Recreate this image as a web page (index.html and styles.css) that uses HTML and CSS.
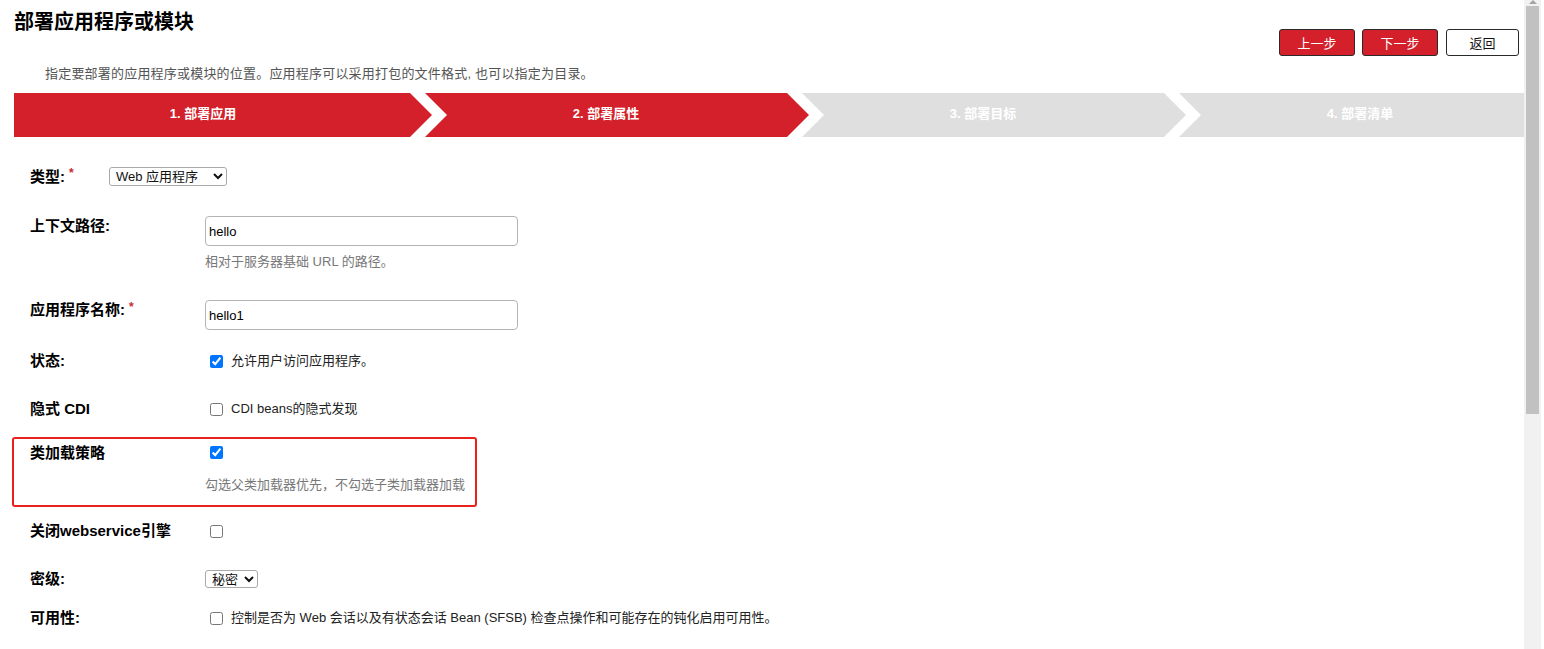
FILE: index.html
```html
<!DOCTYPE html>
<html lang="zh-CN">
<head>
<meta charset="utf-8">
<title>部署应用程序或模块</title>
<link rel="stylesheet" href="styles.css">
</head>
<body>
<div class="page">
  <div class="main">
    <div class="top">
      <h1 class="title">部署应用程序或模块</h1>
      <div class="actions">
        <button class="btn btn-red">上一步</button>
        <button class="btn btn-red">下一步</button>
        <button class="btn btn-white">返回</button>
      </div>
    </div>
    <p class="subtitle">指定要部署的应用程序或模块的位置。应用程序可以采用打包的文件格式, 也可以指定为目录。</p>
    <div class="steps">
      <div class="step step-first step-done">1. 部署应用</div>
      <div class="step step-done">2. 部署属性</div>
      <div class="step step-todo">3. 部署目标</div>
      <div class="step step-todo">4. 部署清单</div>
    </div>

    <div class="form">
      <div class="row row-type">
        <div class="label label-short">类型:<span class="req">*</span></div>
        <select class="sel sel-type"><option>Web 应用程序</option></select>
      </div>

      <div class="row row-ctx">
        <div class="label">上下文路径:</div>
        <div class="ctrl">
          <input class="text" type="text" value="hello">
          <div class="help help-ctx">相对于服务器基础 URL 的路径。</div>
        </div>
      </div>

      <div class="row row-name">
        <div class="label">应用程序名称:<span class="req">*</span></div>
        <div class="ctrl">
          <input class="text" type="text" value="hello1">
        </div>
      </div>

      <div class="row row-state">
        <div class="label">状态:</div>
        <div class="ctrl ctrl-check">
          <input class="cb" type="checkbox" checked>
          <span class="cb-text">允许用户访问应用程序。</span>
        </div>
      </div>

      <div class="row row-cdi">
        <div class="label">隐式 CDI</div>
        <div class="ctrl ctrl-check">
          <input class="cb" type="checkbox">
          <span class="cb-text">CDI beans的隐式发现</span>
        </div>
      </div>

      <div class="highlight">
        <div class="row row-cls">
          <div class="label">类加载策略</div>
          <div class="ctrl ctrl-check">
            <input class="cb" type="checkbox" checked>
          </div>
        </div>
        <div class="help help-cls">勾选父类加载器优先，不勾选子类加载器加载</div>
      </div>

      <div class="row row-ws">
        <div class="label">关闭webservice引擎</div>
        <div class="ctrl ctrl-check">
          <input class="cb" type="checkbox">
        </div>
      </div>

      <div class="row row-level">
        <div class="label">密级:</div>
        <div class="ctrl">
          <select class="sel sel-level"><option>秘密</option></select>
        </div>
      </div>

      <div class="row row-avail">
        <div class="label">可用性:</div>
        <div class="ctrl ctrl-check">
          <input class="cb" type="checkbox">
          <span class="cb-text">控制是否为 Web 会话以及有状态会话 Bean (SFSB) 检查点操作和可能存在的钝化启用可用性。</span>
        </div>
      </div>
    </div>
  </div>
  <div class="scrollbar">
    <div class="sb-arrow"></div>
    <div class="sb-thumb"></div>
  </div>
</div>
</body>
</html>
```

FILE: styles.css
```css
* { box-sizing: border-box; }
html, body {
  margin: 0;
  padding: 0;
  background: #ffffff;
  overflow: hidden;
}
body {
  font-family: "Liberation Sans", "Noto Sans CJK SC", sans-serif;
  color: #000;
}
.page {
  display: flex;
  width: 1544px;
  height: 649px;
  padding-right: 3px;
}
.main {
  width: 1524px;
  flex: none;
  overflow: hidden;
}
.top {
  display: flex;
  justify-content: space-between;
  align-items: flex-start;
  height: 56px;
  padding: 0 5px 0 14px;
}
.title {
  margin: 10px 0 0 0;
  font-size: 20px;
  line-height: 24px;
  font-weight: bold;
}
.actions {
  display: flex;
  gap: 7px;
  margin-top: 29px;
}
.btn {
  height: 27px;
  width: 76px;
  border: 1px solid #2a2a2a;
  border-radius: 3px;
  font-family: "Liberation Sans", "Noto Sans CJK SC", sans-serif;
  font-size: 13px;
  padding: 0;
  cursor: pointer;
}
.btn-red {
  background: #d4202a;
  color: #fff;
}
.btn-white {
  background: #fff;
  color: #111;
  width: 73px;
  margin-left: 1px;
}
.subtitle {
  margin: 9px 0 0 0;
  padding-left: 45px;
  font-size: 13px;
  line-height: 18px;
  letter-spacing: 0.2px;
  color: #555;
}
.steps {
  display: flex;
  margin: 10px 0 0 14px;
  height: 44px;
  overflow: hidden;
}
.step {
  flex: none;
  height: 44px;
  line-height: 42px;
  text-align: center;
  color: #fff;
  font-size: 13px;
  font-weight: bold;
  width: 384px;
  margin-left: -7px;
  padding-right: 22px;
  clip-path: polygon(0 0, calc(100% - 22px) 0, 100% 50%, calc(100% - 22px) 100%, 0 100%, 22px 50%);
}
.step-first {
  width: 418px;
  margin-left: 0;
  padding-right: 40px;
  clip-path: polygon(0 0, calc(100% - 22px) 0, 100% 50%, calc(100% - 22px) 100%, 0 100%);
}
.step-done { background: #d4202a; }
.step-todo { background: #dfdfdf; }

.form {
  padding-left: 30px;
}
.row {
  display: flex;
  align-items: flex-start;
}
.label {
  width: 175px;
  flex: none;
  font-size: 15px;
  font-weight: bold;
  line-height: 20px;
}
.label-short {
  width: 79px;
  line-height: 19px;
}
.req {
  color: #c8282e;
  font-size: 12px;
  vertical-align: top;
  position: relative;
  top: -3px;
  margin-left: 4px;
}
.ctrl {
  display: flex;
  flex-direction: column;
}
.ctrl-check {
  flex-direction: row;
  align-items: center;
  height: 20px;
}
.sel {
  font-family: "Liberation Sans", "Noto Sans CJK SC", sans-serif;
  font-size: 13px;
  color: #111;
  border: 1px solid #a9a9a9;
  border-radius: 3px;
  background: #fff;
  padding: 0 0 0 2px;
}
.sel-type {
  width: 118px;
  height: 19px;
}
.sel-level {
  width: 53px;
  height: 18px;
  margin-top: 1px;
}
.text {
  width: 313px;
  height: 30px;
  border: 1px solid #b4b4b4;
  border-radius: 4px;
  padding: 0 3px;
  font-family: "Liberation Sans", "Noto Sans CJK SC", sans-serif;
  font-size: 13px;
  color: #000;
}
.help {
  font-size: 13px;
  line-height: 18px;
  color: #777;
}
.help-ctx {
  margin-top: 7px;
}
.cb {
  width: 13px;
  height: 13px;
  margin: 0 8px 0 5px;
  flex: none;
}
.cb-text {
  font-size: 13px;
  color: #222;
  line-height: 20px;
}
.row-type { margin-top: 30px; }
.row-ctx { margin-top: 30px; }
.row-name { margin-top: 29px; }
.row-state { margin-top: 21px; }
.row-cdi { margin-top: 28px; }
.highlight {
  margin: 18px 0 0 -18px;
  width: 465px;
  border: 2px solid #e8231c;
  border-radius: 3px;
  padding: 4px 0 11px 16px;
}
.row-cls .ctrl-check { margin-top: -1px; }
.help-cls {
  margin: 13px 0 0 175px;
}
.row-ws { margin-top: 14px; }
.row-level { margin-top: 28px; }
.row-avail { margin-top: 19px; }

.scrollbar {
  width: 17px;
  flex: none;
  background: #f1f1f1;
  padding: 0 2px;
  display: flex;
  flex-direction: column;
  align-items: center;
}
.sb-arrow {
  width: 0;
  height: 0;
  border-left: 4px solid transparent;
  border-right: 4px solid transparent;
  border-bottom: 4px solid #a3a3a3;
  margin-top: 0;
}
.sb-thumb {
  width: 13px;
  height: 408px;
  margin-top: 2px;
  background: #c1c1c1;
}
```
